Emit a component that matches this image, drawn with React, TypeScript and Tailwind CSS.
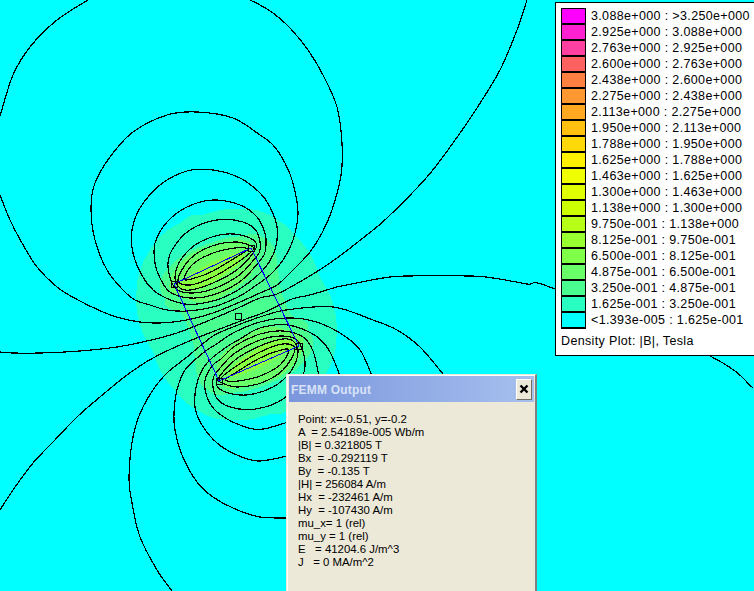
type Pt = [number, number];

const legend: [string, string][] = [
  ["#ff00ff", "3.088e+000 : >3.250e+000"],
  ["#ff20d0", "2.925e+000 : 3.088e+000"],
  ["#ff40a0", "2.763e+000 : 2.925e+000"],
  ["#ff6060", "2.600e+000 : 2.763e+000"],
  ["#ff8040", "2.438e+000 : 2.600e+000"],
  ["#ff9830", "2.275e+000 : 2.438e+000"],
  ["#ffa820", "2.113e+000 : 2.275e+000"],
  ["#ffc010", "1.950e+000 : 2.113e+000"],
  ["#ffd808", "1.788e+000 : 1.950e+000"],
  ["#fff000", "1.625e+000 : 1.788e+000"],
  ["#f0ff00", "1.463e+000 : 1.625e+000"],
  ["#dfff00", "1.300e+000 : 1.463e+000"],
  ["#ccff00", "1.138e+000 : 1.300e+000"],
  ["#b8ff18", "9.750e-001 : 1.138e+000"],
  ["#98ff30", "8.125e-001 : 9.750e-001"],
  ["#80ff48", "6.500e-001 : 8.125e-001"],
  ["#68ff68", "4.875e-001 : 6.500e-001"],
  ["#48ff90", "3.250e-001 : 4.875e-001"],
  ["#28ffc0", "1.625e-001 : 3.250e-001"],
  ["#00ffff", "<1.393e-005 : 1.625e-001"],
];

const output = [
  "Point: x=-0.51, y=-0.2",
  "A  = 2.54189e-005 Wb/m",
  "|B| = 0.321805 T",
  "Bx  = -0.292119 T",
  "By  = -0.135 T",
  "|H| = 256084 A/m",
  "Hx  = -232461 A/m",
  "Hy  = -107430 A/m",
  "mu_x= 1 (rel)",
  "mu_y = 1 (rel)",
  "E   = 41204.6 J/m^3",
  "J   = 0 MA/m^2",
];

// point reflection through the middle of the block
const flip = (pts: Pt[]): Pt[] => pts.map(([x, y]) => [473 - x, 629 - y]);

function curve(pts: Pt[], closed = false) {
  const n = pts.length;
  const at = (i: number) => (closed ? pts[(i + n) % n] : pts[Math.max(0, Math.min(n - 1, i))]);
  let d = `M${pts[0][0]} ${pts[0][1]}`;
  const end = closed ? n : n - 1;
  for (let i = 0; i < end; i++) {
    const [p0, p1, p2, p3] = [at(i - 1), at(i), at(i + 1), at(i + 2)];
    const c1x = p1[0] + (p2[0] - p0[0]) / 6;
    const c1y = p1[1] + (p2[1] - p0[1]) / 6;
    const c2x = p2[0] - (p3[0] - p1[0]) / 6;
    const c2y = p2[1] - (p3[1] - p1[1]) / 6;
    d += `C${c1x.toFixed(1)} ${c1y.toFixed(1)} ${c2x.toFixed(1)} ${c2y.toFixed(1)} ${p2[0]} ${p2[1]}`;
  }
  return closed ? d + "Z" : d;
}

// density bands
const band1: Pt[] = [[137, 300], [140, 270], [157, 240], [180, 223], [213, 212], [233, 210], [260, 212], [273, 217], [293, 232], [307, 257], [320, 277], [333, 303], [337, 333], [330, 360], [320, 380], [285, 412], [267, 413], [253, 419], [233, 420], [213, 418], [193, 407], [177, 393], [160, 370], [147, 333]];
const band2: Pt[] = [[165, 273], [180, 260], [197, 252], [220, 243], [247, 237], [263, 238], [273, 260], [277, 277], [290, 313], [310, 333], [312, 350], [300, 365], [285, 377], [250, 390], [230, 393], [217, 395], [200, 383], [195, 360], [193, 337], [190, 317], [167, 307], [165, 293]];
const band3: Pt[] = [[173, 273], [193, 253], [227, 242], [250, 243], [255, 267], [237, 287], [207, 302], [180, 297], [170, 290]];
const band4: Pt[] = [[182, 280], [213, 262], [243, 252], [235, 267], [203, 287], [180, 288]];

// contour loops around the upper edge, the lower ones are the same flipped
const loops: Pt[][] = [
  [[184, 279], [193, 264], [213, 253], [235, 248], [248, 249], [238, 256], [213, 271], [195, 278]],
  [[178, 280], [190, 259], [212, 246], [236, 242], [251, 246], [253, 250], [238, 262], [213, 277], [190, 285]],
  [[175, 277], [182, 258], [200, 242], [227, 234], [250, 238], [256, 248], [238, 269], [213, 283], [190, 290], [180, 288]],
  [[172, 250], [190, 230], [217, 220], [243, 222], [257, 232], [260, 250], [252, 262], [238, 276], [213, 289], [190, 293], [175, 288], [168, 267]],
];

const open: Pt[][] = [
  [[0, 116], [13, 75], [30, 47], [57, 20], [88, 0]],
  [[0, 195], [10, 220], [22, 243], [37, 267], [57, 287], [78, 300], [103, 312], [120, 318], [140, 322], [160, 323], [187, 320], [213, 313], [240, 302], [260, 293], [277, 285], [293, 270], [310, 252], [322, 233], [332, 210], [341, 175], [342, 143], [337, 107], [323, 75], [308, 50], [290, 28], [273, 13], [260, 5], [250, 0]],
  // lines across the block
  [[0, 352], [13, 353], [40, 353], [80, 351], [117, 347], [147, 341], [177, 333], [210, 320], [238, 308], [260, 298], [277, 294], [303, 280], [330, 263], [363, 238], [387, 218], [427, 177], [453, 143], [477, 108], [500, 70], [517, 30], [527, 0]],
  [[0, 510], [13, 490], [33, 463], [53, 442], [77, 417], [100, 397], [127, 375], [153, 358], [187, 342], [238, 322], [265, 312], [292, 299], [310, 295], [337, 287], [357, 283], [383, 278], [407, 276], [470, 276], [493, 278], [527, 284], [555, 289], [710, 356], [753, 388]],
  // lower half, runs under the output window
  [[172, 591], [157, 570], [140, 537], [132, 503], [129, 477], [133, 437], [143, 407], [163, 377], [187, 357], [213, 336], [233, 327], [260, 317], [286, 310], [333, 307], [373, 320], [397, 330], [420, 347], [443, 374]],
  [[300, 518], [260, 517], [233, 508], [213, 497], [197, 482], [182, 455], [175, 430], [174, 413], [177, 390], [185, 370], [203, 353], [215, 345], [235, 332], [260, 322], [286, 318], [313, 321], [340, 333], [360, 350], [372, 376]],
  [[300, 453], [260, 461], [237, 455], [217, 443], [202, 425], [195, 407], [197, 383], [207, 363], [225, 348], [240, 339], [260, 328], [288, 325], [316, 336], [330, 352], [340, 376]],
  [[300, 418], [263, 429], [240, 425], [217, 412], [207, 397], [205, 380], [213, 365], [221, 359], [235, 346], [260, 334], [283, 331], [303, 337], [313, 351], [319, 376]],
];

const closed: Pt[][] = [
  [[135, 300], [123, 290], [107, 270], [95, 240], [91, 208], [95, 183], [110, 157], [133, 132], [167, 115], [197, 112], [233, 118], [260, 135], [273, 145], [285, 163], [293, 183], [298, 213], [293, 240], [283, 260], [270, 275], [258, 284], [238, 297], [213, 307], [187, 311], [167, 310], [150, 305]],
  [[133, 253], [132, 230], [140, 208], [160, 185], [187, 171], [213, 170], [240, 178], [260, 193], [270, 207], [277, 227], [275, 250], [263, 270], [238, 290], [213, 301], [185, 304], [157, 293], [143, 277]],
  [[155, 263], [155, 243], [167, 222], [187, 207], [213, 200], [240, 205], [257, 217], [265, 233], [266, 243], [264, 255], [252, 270], [238, 283], [213, 295], [190, 298], [170, 292], [160, 278]],
  ...loops,
  ...loops.map(flip),
];

const nodes: Pt[] = [[251, 248], [174, 284], [299, 346], [219, 381], [238, 316]];

function Plot() {
  return (
    <svg width="754" height="591" viewBox="0 0 754 591" className="block" shapeRendering="crispEdges">
      {[band1, flip(band1)].map((b, i) => (
        <path key={i} d={curve(b, true)} fill="#28ffc0" />
      ))}
      {[band2, flip(band2)].map((b, i) => (
        <path key={i} d={curve(b, true)} fill="#48ff90" />
      ))}
      {[band3, flip(band3)].map((b, i) => (
        <path key={i} d={curve(b, true)} fill="#68ff68" />
      ))}
      {[band4, flip(band4)].map((b, i) => (
        <path key={i} d={curve(b, true)} fill="#88ff40" />
      ))}
      <g fill="none" stroke="#000" strokeWidth="1.2">
        {open.map((l, i) => (
          <path key={i} d={curve(l)} />
        ))}
        {closed.map((l, i) => (
          <path key={i} d={curve(l, true)} />
        ))}
      </g>
      <path d="M174 284L251 248L299 346L219 381Z" fill="none" stroke="#0000ff" />
      {nodes.map(([x, y], i) => (
        <rect key={i} x={x - 3} y={y - 3} width="6" height="6" fill="none" stroke="#000" />
      ))}
    </svg>
  );
}

export default function App() {
  return (
    <div className="relative w-[754px] h-[591px] overflow-hidden bg-[#00ffff]">
      <Plot />

      {/* Legend */}
      <div className="absolute left-[555px] top-[2px] w-[200px] h-[354px] bg-white border border-black pl-[5px] pt-[5px] font-['Liberation_Sans',sans-serif] text-[12.5px] tracking-[0.35px] text-black">
        {legend.map(([color, label]) => (
          <div key={label} className="flex items-start h-4">
            <div className="w-[25px] h-[17px] shrink-0 border border-b-2 border-black" style={{ backgroundColor: color }} />
            <span className="ml-[5px] leading-[17px] whitespace-pre">{label}</span>
          </div>
        ))}
        <div className="mt-[6px] leading-[15px]">Density Plot: |B|, Tesla</div>
      </div>

      {/* Output window */}
      <div className="absolute left-[286px] top-[374px] w-[251px] h-[240px] bg-[#ece9d8] border-t border-t-[#ece9d8] border-l border-l-[#ece9d8] border-r-2 border-r-[#808080] shadow-[inset_1px_1px_0_#fff] pl-[1px] pt-[1px]">
        <div className="flex items-center justify-between h-[26px] mx-[1px] pl-[2px] pr-[2px] bg-gradient-to-r from-[#7b96dc] to-[#a6c0ee]">
          <span className="pt-[1px] font-['Liberation_Sans',sans-serif] text-[12px] tracking-[0.2px] font-bold text-[#d8e2f8]">FEMM Output</span>
          <button className="flex items-center justify-center w-[16px] h-[21px] bg-[#ece9d8] border border-t-white border-l-white border-r-[#716f64] border-b-[#716f64]">
            <svg width="10" height="10" viewBox="0 0 10 10">
              <path d="M1.5 1.5L8.5 8.5M8.5 1.5L1.5 8.5" stroke="#000" strokeWidth="2.4" />
            </svg>
          </button>
        </div>
        <div className="pl-[10px] pt-[11px] font-['Liberation_Sans',sans-serif] text-[11.4px] leading-[13px] text-black">
          {output.map((row) => (
            <div key={row} className="whitespace-pre">{row}</div>
          ))}
        </div>
      </div>
    </div>
  );
}
